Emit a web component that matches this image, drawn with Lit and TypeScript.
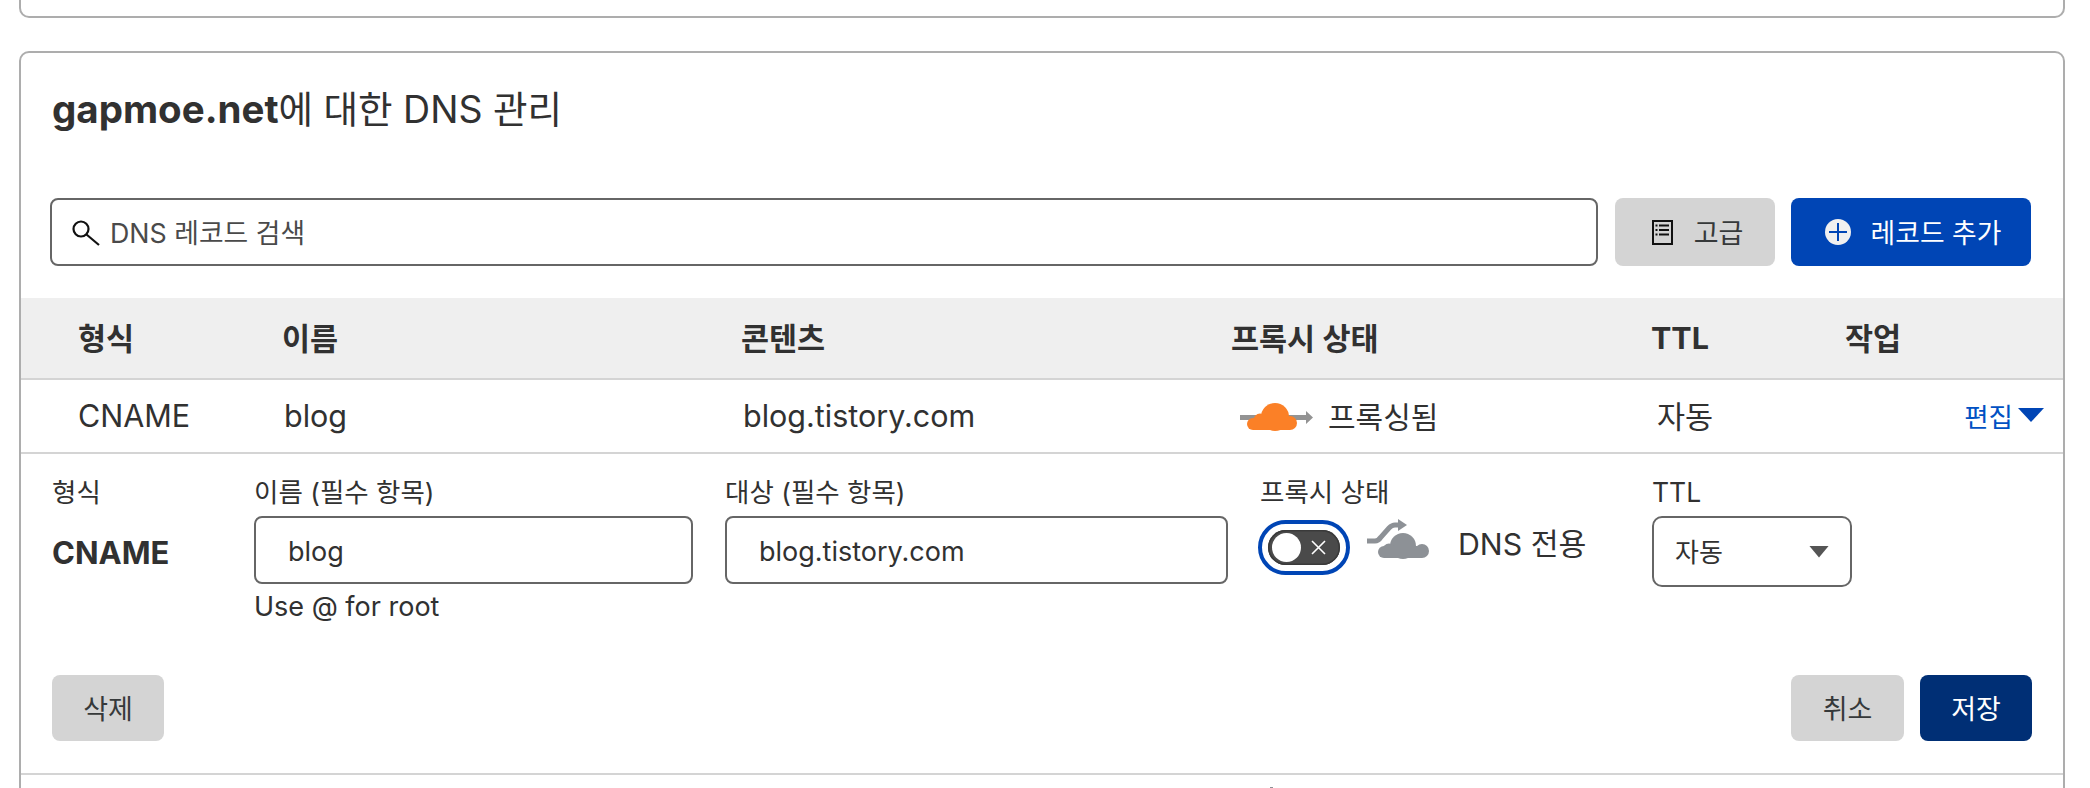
import { LitElement, html, css } from 'lit';
import { customElement } from 'lit/decorators.js';

const orangeCloud = html`<svg class="cloud-on" width="73" height="32" viewBox="0 0 73 32">
  <path d="M0 16h66v-4l7 6.5-7 6.5v-4H0z" fill="#939393" />
  <g fill="#fb8027">
    <circle cx="35" cy="18" r="14" />
    <circle cx="20" cy="21" r="6.5" />
    <circle cx="13" cy="25" r="6" />
    <circle cx="50" cy="24" r="7" />
    <rect x="13" y="20" width="37" height="11" />
  </g>
</svg>`;

const greyCloud = html`<svg class="cloud-off" width="64" height="46" viewBox="0 0 64 46">
  <path d="M1 27h8c3 0 4-1 6-4l8-9c2-2 3-3 6-3h5" fill="none" stroke="#8d9196" stroke-width="5" />
  <path d="M32 5l9 6-9 6z" fill="#8d9196" />
  <g fill="#8d9196">
    <circle cx="37" cy="32" r="13" />
    <circle cx="23" cy="36" r="6.5" />
    <circle cx="18" cy="38" r="6" />
    <circle cx="56" cy="37" r="7" />
    <rect x="18" y="32" width="38" height="12" />
  </g>
</svg>`;

@customElement('app-root')
export class AppRoot extends LitElement {
  static styles = css`
    :host {
      display: block;
      width: 2090px;
      height: 788px;
      overflow: hidden;
      background: #fff;
      color: #313131;
      font-family: 'Inter', 'Noto Sans CJK KR', sans-serif;
      font-size: 30px;
      box-sizing: border-box;
      padding: 0 25px 0 19px;
    }

    * {
      box-sizing: border-box;
    }

    .prev-card {
      height: 18px;
      border: 2px solid #adadad;
      border-top: 0;
      border-radius: 0 0 10px 10px;
      margin-bottom: 33px;
    }

    .card {
      border: 2px solid #adadad;
      border-radius: 10px;
      height: 800px;
    }

    h2 {
      margin: 0;
      height: 145px;
      padding: 34px 0 0 31px;
      font-size: 37.5px;
      line-height: 44px;
      font-weight: 400;
    }

    h2 b {
      font-weight: 700;
      font-size: 38.5px;
    }

    .toolbar {
      display: flex;
      padding: 0 32px 0 29px;
      height: 100px;
    }

    .search {
      flex: 1;
      height: 68px;
      border: 2px solid #666;
      border-radius: 8px;
      display: flex;
      align-items: center;
      padding-left: 20px;
      gap: 10px;
      color: #4a4a4a;
      font-size: 26.8px;
      margin-right: 17px;
    }

    .search svg {
      flex: none;
    }

    .search span {
      padding-bottom: 2px;
    }

    .btn {
      height: 68px;
      border-radius: 8px;
      display: flex;
      align-items: center;
      justify-content: center;
      background: #d4d4d4;
      font-size: 27px;
      color: #36393a;
      padding-bottom: 2px;
    }

    .btn svg {
      flex: none;
      margin-top: 2px;
    }

    .btn.advanced {
      width: 160px;
      gap: 21px;
      margin-right: 16px;
      padding-left: 5px;
    }

    .btn.add {
      width: 240px;
      gap: 20px;
      background: #0045b5;
      color: #fff;
      font-size: 26.8px;
      padding-left: 4px;
    }

    .row {
      display: grid;
      grid-template-columns: 204px 459px 490px 420px 194px 1fr;
      padding-left: 57px;
      align-items: center;
    }

    .head {
      height: 82px;
      background: #efefef;
      border-bottom: 2px solid #d4d4d4;
      font-weight: 700;
      font-size: 30.5px;
      padding-bottom: 2px;
    }

    .data {
      height: 74px;
      border-bottom: 2px solid #d4d4d4;
      font-size: 30.5px;
      padding-bottom: 2px;
    }

    .proxied {
      display: flex;
      align-items: center;
      gap: 15px;
      margin-left: 9px;
      font-size: 30px;
    }

    .cloud-on {
      flex: none;
    }

    .cell-nudge {
      margin-left: 2px;
    }

    .ttl-cell {
      margin-left: 6px;
    }

    .edit-link {
      display: flex;
      align-items: center;
      justify-content: flex-end;
      gap: 5px;
      padding-right: 19px;
      color: #0051c3;
      font-size: 26.5px;
    }

    .tri {
      width: 26px;
      height: 14px;
      flex: none;
      background: #0045b5;
      clip-path: polygon(0 0, 100% 0, 50% 100%);
    }

    .editor {
      height: 321px;
      border-bottom: 2px solid #d4d4d4;
      padding: 0 31px 0 31px;
      display: flex;
      flex-direction: column;
    }

    .fields {
      display: grid;
      grid-template-columns: 202px 471px 535px 392px 1fr;
      height: 221px;
      padding-top: 20px;
      font-size: 27px;
    }

    .label {
      height: 34px;
      line-height: 34px;
      margin-bottom: 8px;
      padding-top: 1px;
      font-size: 26.5px;
      white-space: nowrap;
    }

    .type-value {
      font-weight: 700;
      margin-top: 28px;
      line-height: 34px;
      font-size: 31px;
    }

    .input {
      height: 68px;
      border: 2px solid #666;
      border-radius: 8px;
      display: flex;
      align-items: center;
      padding: 2px 0 0 32px;
    }

    .w-name {
      width: 439px;
    }

    .w-target {
      width: 503px;
    }

    .hint {
      margin-top: 6px;
      line-height: 34px;
    }

    .proxy-box {
      display: flex;
      align-items: flex-start;
    }

    .toggle-ring {
      width: 92px;
      height: 55px;
      flex: none;
      border: 4px solid #0045b5;
      border-radius: 28px;
      padding: 6px;
      margin: 4px 0 0 -2px;
    }

    .track {
      position: relative;
      height: 100%;
      border-radius: 18px;
      background: #4a4a4a;
      box-shadow: inset 0 0 0 1.5px #3a3a3a;
      display: flex;
      align-items: center;
      justify-content: flex-end;
      padding-right: 14px;
    }

    .knob {
      position: absolute;
      left: 4px;
      top: 3px;
      width: 29px;
      height: 29px;
      border-radius: 50%;
      background: #fff;
    }

    .cloud-off {
      margin: -2px 0 0 16px;
      flex: none;
    }

    .dns-only {
      margin: 11px 0 0 28px;
      line-height: 34px;
      font-size: 30.3px;
      white-space: nowrap;
    }

    .select {
      width: 200px;
      height: 71px;
      border: 2px solid #666;
      border-radius: 10px;
      display: flex;
      align-items: center;
      justify-content: space-between;
      padding: 0 21px 0 21px;
      font-size: 26px;
    }

    .select span {
      padding-bottom: 3px;
    }

    .select i {
      width: 20px;
      height: 12px;
      background: #555;
      clip-path: polygon(0 0, 100% 0, 50% 100%);
    }

    .actions {
      display: flex;
      align-items: flex-start;
    }

    .actions .btn {
      width: 112px;
      height: 66px;
    }

    .spacer {
      flex: 1;
    }

    .actions .cancel {
      width: 113px;
      margin-right: 16px;
    }

    .actions .save {
      background: #002f75;
      color: #fff;
    }

    /* top of the next row's cloud just shows at the bottom edge */
    .next-peek {
      width: 3px;
      height: 1px;
      margin: 12px 0 0 1249px;
      background: #8d9196;
    }
  `;

  render() {
    return html`
      <div class="prev-card"></div>
      <section class="card">
        <h2><b>gapmoe.net</b>에 대한 DNS 관리</h2>

        <div class="toolbar">
          <div class="search">
            <svg width="28" height="28" viewBox="0 0 28 28" fill="none" stroke="#111" stroke-width="2.2">
              <circle cx="9" cy="11" r="7.5" />
              <path d="M14.5 16.5L27 27" />
            </svg>
            <span>DNS 레코드 검색</span>
          </div>
          <div class="btn advanced">
            <svg width="21" height="25" viewBox="0 0 21 25" fill="none" stroke="#111" stroke-width="2">
              <rect x="1" y="1" width="19" height="23" />
              <path d="M7 5.5h10M7 10h10M7 14.5h10" />
              <path d="M3.5 5.5h2M3.5 10h2M3.5 14.5h2" />
            </svg>
            <span>고급</span>
          </div>
          <div class="btn add">
            <svg width="26" height="26" viewBox="0 0 26 26">
              <circle cx="13" cy="13" r="13" fill="#f0f0f0" />
              <path d="M13 4v18M4 13h18" stroke="#0045b5" stroke-width="2" />
            </svg>
            <span>레코드 추가</span>
          </div>
        </div>

        <div class="row head">
          <span>형식</span>
          <span>이름</span>
          <span>콘텐츠</span>
          <span>프록시 상태</span>
          <span>TTL</span>
          <span>작업</span>
        </div>

        <div class="row data">
          <span>CNAME</span>
          <span class="cell-nudge">blog</span>
          <span class="cell-nudge">blog.tistory.com</span>
          <div class="proxied">${orangeCloud}<span>프록싱됨</span></div>
          <span class="ttl-cell">자동</span>
          <div class="edit-link"><span>편집</span><span class="tri"></span></div>
        </div>

        <div class="editor">
          <div class="fields">
            <div>
              <div class="label">형식</div>
              <div class="type-value">CNAME</div>
            </div>
            <div>
              <div class="label">이름 (필수 항목)</div>
              <div class="input w-name">blog</div>
              <div class="hint">Use @ for root</div>
            </div>
            <div>
              <div class="label">대상 (필수 항목)</div>
              <div class="input w-target">blog.tistory.com</div>
            </div>
            <div>
              <div class="label">프록시 상태</div>
              <div class="proxy-box">
                <div class="toggle-ring">
                  <div class="track">
                    <span class="knob"></span>
                    <svg width="15" height="15" viewBox="0 0 15 15">
                      <path d="M1 1l13 13M14 1L1 14" stroke="#fff" stroke-width="1.6" />
                    </svg>
                  </div>
                </div>
                ${greyCloud}
                <span class="dns-only">DNS 전용</span>
              </div>
            </div>
            <div>
              <div class="label">TTL</div>
              <div class="select"><span>자동</span><i></i></div>
            </div>
          </div>
          <div class="actions">
            <div class="btn">삭제</div>
            <div class="spacer"></div>
            <div class="btn cancel">취소</div>
            <div class="btn save">저장</div>
          </div>
        </div>
        <div class="next-peek"></div>
      </section>
    `;
  }
}
